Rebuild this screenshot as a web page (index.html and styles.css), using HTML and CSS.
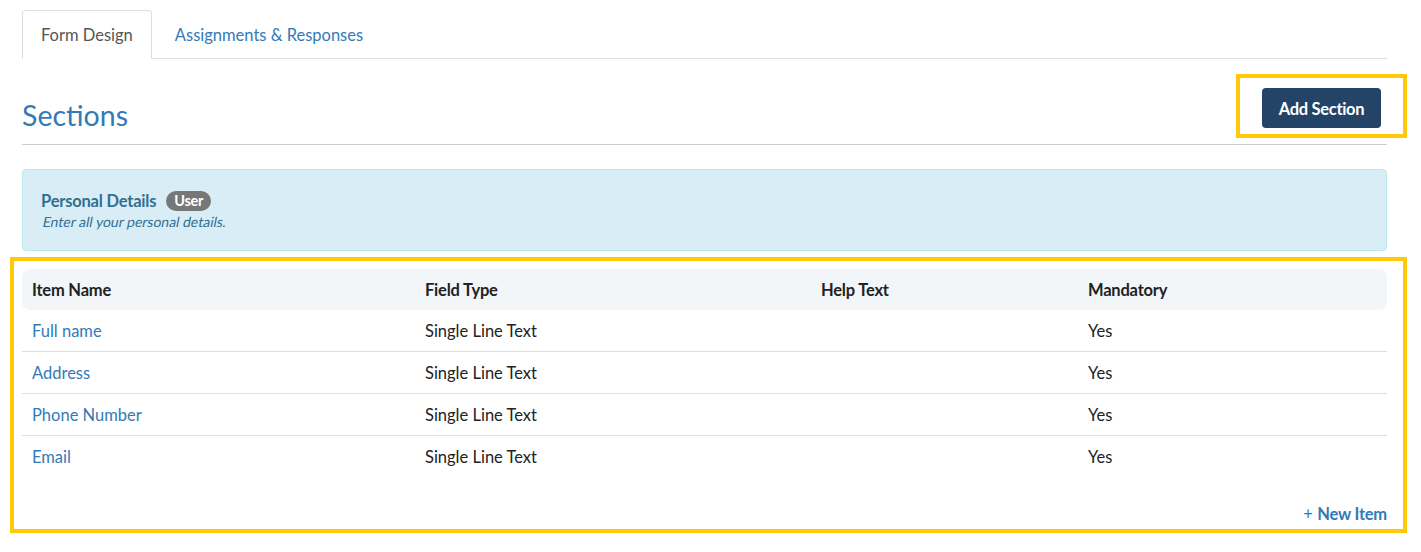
FILE: index.html
```html
<!DOCTYPE html>
<html>
<head>
<meta charset="utf-8">
<link rel="stylesheet" href="styles.css">
</head>
<body>
<div class="page">
  <ul class="tabs">
    <li class="tab active">Form Design</li>
    <li class="tab">Assignments &amp; Responses</li>
  </ul>

  <div class="page-header">
    <h2 class="title">Sections</h2>
    <div class="highlight-wrap">
      <button class="btn-primary">Add Section</button>
      <span class="highlight hl-button"></span>
    </div>
  </div>

  <div class="panel">
    <div class="panel-title">Personal Details <span class="badge">User</span></div>
    <div class="panel-desc"><span class="oblique">Enter all your personal details.</span></div>
  </div>

  <div class="highlight-wrap items">
    <table class="items-table">
      <colgroup>
        <col class="c1"><col class="c2"><col class="c3"><col class="c4">
      </colgroup>
      <thead>
        <tr><th>Item Name</th><th>Field Type</th><th>Help Text</th><th>Mandatory</th></tr>
      </thead>
      <tbody>
        <tr><td><a class="link">Full name</a></td><td>Single Line Text</td><td></td><td>Yes</td></tr>
        <tr><td><a class="link">Address</a></td><td>Single Line Text</td><td></td><td>Yes</td></tr>
        <tr><td><a class="link">Phone Number</a></td><td>Single Line Text</td><td></td><td>Yes</td></tr>
        <tr><td><a class="link">Email</a></td><td>Single Line Text</td><td></td><td>Yes</td></tr>
      </tbody>
    </table>
    <div class="new-item"><a class="link"><span class="plus">+</span> <b>New Item</b></a></div>
    <span class="highlight hl-table"></span>
  </div>
</div>
</body>
</html>
```

FILE: styles.css
```css
* { box-sizing: border-box; }
html, body { margin: 0; padding: 0; background: #fff; }
body {
  font-family: Lato, "Open Sans", "Liberation Sans", sans-serif;
  font-size: 16.5px;
  color: #222;
  min-height: 552px;
}
.page {
  margin: 0 34px 0 22px;
  padding-top: 10px;
  padding-bottom: 20px;
}
.tabs {
  list-style: none;
  margin: 0;
  padding: 0;
  display: flex;
  border-bottom: 1px solid #ddd;
  height: 49px;
}
.tab {
  padding: 13px 18px;
  line-height: 22px;
  border: 1px solid transparent;
  border-radius: 4px 4px 0 0;
  color: #337ab7;
  margin-left: 4px;
  height: 49px;
}
.tab.active {
  margin-left: 0;
  color: #555;
  background: #fff;
  border-color: #ddd;
  border-bottom-color: #fff;
}
.page-header {
  display: flex;
  justify-content: space-between;
  align-items: flex-start;
  border-bottom: 1px solid #ccc;
  height: 86px;
}
.title {
  margin: 38px 0 0 0;
  font-size: 28.5px;
  line-height: 36px;
  font-weight: 400;
  color: #337ab7;
}
.highlight-wrap { position: relative; }
.page-header .highlight-wrap { margin-top: 29px; margin-right: 6px; }
.btn-primary {
  display: block;
  font-family: inherit;
  font-size: 16.5px;
  font-weight: 700;
  color: #fff;
  background: #234467;
  border: none;
  border-radius: 4px;
  height: 40px;
  width: 119px;
  padding: 2px 0 0;
  letter-spacing: -0.3px;
}
.highlight {
  position: absolute;
  border: 4px solid #ffc907;
  pointer-events: none;
}
.hl-button { left: -26px; right: -26px; top: -14px; bottom: -10px; }
.panel {
  margin-top: 24px;
  background: #d9edf7;
  border: 1px solid #bce8f1;
  border-radius: 4px;
  padding: 20px 18px 18px 18px;
  color: #31708f;
}
.panel-title {
  font-size: 16.5px;
  font-weight: 700;
  line-height: 22px;
  display: flex;
  align-items: center;
  letter-spacing: -0.2px;
}
.badge {
  display: inline-block;
  margin-left: 10px;
  background: #777;
  color: #fff;
  font-size: 14.5px;
  font-weight: 700;
  line-height: 20px;
  padding: 0 8px;
  border-radius: 10px;
  letter-spacing: -0.3px;
}
.panel-desc {
  font-size: 14px;
  line-height: 20px;
}
.oblique {
  display: inline-block;
  transform: skewX(-11deg);
  transform-origin: left bottom;
}
.items { margin-top: 18px; padding-bottom: 5px; }
.hl-table { left: -12px; right: -20px; top: -12px; bottom: -4px; }
.items-table {
  width: 100%;
  border-collapse: collapse;
  table-layout: fixed;
}
.c1 { width: 393px; }
.c2 { width: 396px; }
.c3 { width: 267px; }
.items-table th {
  text-align: left;
  font-weight: 700;
  background: #f3f6f9;
  height: 41px;
  padding: 1px 10px 0;
  color: #222;
  letter-spacing: -0.2px;
}
.items-table th:first-child { border-radius: 8px 0 0 8px; }
.items-table th:last-child { border-radius: 0 8px 8px 0; }
.items-table td {
  height: 42px;
  padding: 1px 10px 0;
  border-top: 1px solid #ddd;
  color: #222;
}
.items-table tbody tr:first-child td { border-top: none; height: 41px; }
.link { color: #337ab7; text-decoration: none; }
.new-item {
  text-align: right;
  margin-top: 27px;
  line-height: 20px;
}
.new-item b { font-weight: 700; letter-spacing: -0.2px; }
.plus { font-weight: 400; }
```
